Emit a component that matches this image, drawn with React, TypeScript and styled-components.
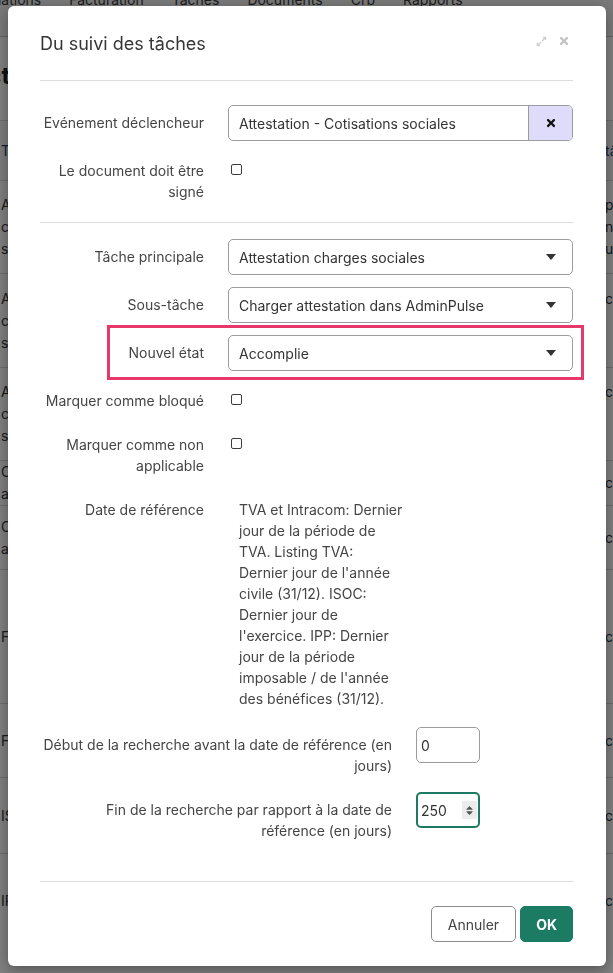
import { FaExpandAlt, FaSort, FaTimes } from 'react-icons/fa';
import styled, { createGlobalStyle } from 'styled-components';

const GlobalStyle = createGlobalStyle`
  * {
    box-sizing: border-box;
  }
  html,
  body {
    margin: 0;
    padding: 0;
    overflow: hidden;
    background: #fff;
    font-family: Inter, 'Noto Sans', sans-serif;
  }
`;

// ---- background page (dimmed behind the modal) ----

const Page = styled.div`
  margin-left: -100px;
  width: 813px;
  height: 973px;
  overflow: hidden;
  color: #333;
`;

const NavBar = styled.nav`
  display: flex;
  align-items: flex-start;
  gap: 28px;
  height: 37px;
  padding-left: 81px;
  background: #f3f3f3;
  border-bottom: 1px solid #c4c4c4;
  overflow: hidden;
`;

const NavLink = styled.span`
  margin-top: -10px;
  font-size: 14px;
  line-height: 20px;
  color: #3a3a3a;
`;

const PageTitle = styled.h1`
  margin: 0;
  height: 83px;
  padding: 24px 0 0 70px;
  font-size: 24px;
  line-height: 30px;
  font-weight: 700;
  color: #222;
`;

const TableRow = styled.div<{ $h: number; $head?: boolean }>`
  display: grid;
  grid-template-columns: 604px 1fr;
  height: ${(p) => p.$h}px;
  padding-left: 101px;
  border-top: 1px solid #d6d6d6;
  background: ${(p) => (p.$head ? '#f7f7f7' : '#fff')};
  color: ${(p) => (p.$head ? '#1f3d6b' : '#333')};
`;

const Cell = styled.div`
  display: flex;
  flex-direction: column;
  justify-content: center;
  font-size: 14px;
  line-height: 22px;
  white-space: nowrap;
  overflow: hidden;
`;

const rows = [
  { h: 60, left: ['Tâche'], right: ['tâche'], head: true },
  { h: 93, left: ['Attestation', 'cotisations', 'sociales'], right: ['pas', 'non', 'uploadé'] },
  { h: 94, left: ['Attestation', 'charges', 'sociales'], right: ['cotisations', '', ''] },
  { h: 93, left: ['Attestation', 'charges', 'sociales'], right: ['cotisations', '', ''] },
  { h: 45, left: ['Compte', 'annuel'], right: ['cotisations'] },
  { h: 64, left: ['Clôture', 'annuelle'], right: ['cotisations'] },
  { h: 134, left: ['Facture'], right: ['cotisations'] },
  { h: 74, left: ['Fiche'], right: ['cotisations'] },
  { h: 76, left: ['ISOC'], right: ['cotisations'] },
  { h: 94, left: ['IPP'], right: ['cotisations'] },
];

// ---- modal ----

const Overlay = styled.div`
  position: fixed;
  inset: 0;
  display: flex;
  padding: 6px 7px 7px 8px;
  background: rgba(0, 0, 0, 0.5);
`;

const Modal = styled.div`
  flex: 1;
  display: flex;
  flex-direction: column;
  padding: 0 33px 0 32px;
  background: #fff;
  border-radius: 6px;
  box-shadow: 0 4px 14px rgba(0, 0, 0, 0.35);
`;

const Header = styled.header`
  display: flex;
  justify-content: space-between;
  align-items: flex-start;
  padding: 24px 0 23px;
  border-bottom: 1px solid #dcdcdc;
`;

const Title = styled.h2`
  margin: 0;
  font-size: 18px;
  line-height: 27px;
  font-weight: 400;
  color: #363636;
`;

const HeaderTools = styled.div`
  display: flex;
  align-items: center;
  gap: 11px;
  padding: 5px 3px 0 0;
  color: #cfcfcf;
`;

const Section = styled.section<{ $top: number; $bottom: number; $border?: boolean }>`
  display: flex;
  flex-direction: column;
  gap: 12px;
  padding: ${(p) => p.$top}px 0 ${(p) => p.$bottom}px;
  border-bottom: ${(p) => (p.$border ? '1px solid #dcdcdc' : 'none')};
`;

const Row = styled.div<{ $wide?: boolean }>`
  position: relative;
  display: grid;
  grid-template-columns: ${(p) => (p.$wide ? '352px 64px' : '164px 1fr')};
  column-gap: 24px;
  align-items: start;
`;

const Label = styled.label`
  padding: 7px 0 4px;
  text-align: right;
  font-size: 14px;
  line-height: 21px;
  color: #454545;
`;

const Control = styled.div<{ $focus?: boolean }>`
  display: flex;
  align-items: center;
  justify-content: space-between;
  height: 36px;
  padding: 0 16px 0 10px;
  border: ${(p) => (p.$focus ? '2px solid #1c7a63' : '1px solid #9c9c9c')};
  border-radius: 5px;
  background: #fff;
  font-size: 14px;
  color: #333;
`;

const NumberControl = styled(Control)`
  padding: ${(p) => (p.$focus ? '0 1px 0 3px' : '0 5px 0 4px')};
`;

const Caret = styled.svg`
  width: 10px;
  height: 6px;
  fill: #333;
`;

const InputGroup = styled.div`
  display: flex;
  height: 36px;
  border: 1px solid #9c9c9c;
  border-radius: 5px;
  overflow: hidden;
  font-size: 14px;
  color: #333;
`;

const GroupText = styled.div`
  flex: 1;
  display: flex;
  align-items: center;
  padding: 0 10px;
`;

const Addon = styled.button`
  display: flex;
  align-items: center;
  justify-content: center;
  width: 44px;
  padding: 0;
  border: none;
  border-left: 1px solid #9c9c9c;
  background: #dfdbfb;
  color: #111;
`;

const Checkbox = styled.input.attrs({ type: 'checkbox' })`
  appearance: none;
  width: 11px;
  height: 11px;
  margin: 11px 0 0 3px;
  border: 1px solid #3d3d3d;
  border-radius: 2px;
  background: #fff;
`;

const StaticText = styled.p`
  margin: 0;
  padding: 7px 11px 6px;
  font-size: 14px;
  line-height: 21px;
  color: #454545;
  white-space: nowrap;
`;

const Spinner = styled.span`
  display: flex;
  align-items: center;
  justify-content: center;
  width: 15px;
  height: 18px;
  background: #ececec;
  color: #555;
`;

const Highlight = styled.div`
  position: absolute;
  top: -10px;
  left: 67px;
  right: -11px;
  bottom: -9px;
  border: 3px solid #e6386b;
  pointer-events: none;
`;

const Footer = styled.footer`
  display: flex;
  justify-content: flex-end;
  gap: 4px;
  margin-top: auto;
  padding: 24px 0;
  border-top: 1px solid #dcdcdc;
`;

const Button = styled.button<{ $primary?: boolean }>`
  height: 36px;
  padding: 0 ${(p) => (p.$primary ? 15 : 16)}px;
  border-radius: 5px;
  border: 1px solid ${(p) => (p.$primary ? '#1b7b63' : '#8c8c8c')};
  background: ${(p) => (p.$primary ? '#1b7b63' : '#fff')};
  color: ${(p) => (p.$primary ? '#fff' : '#444')};
  font-family: Inter, 'Noto Sans', sans-serif;
  font-size: 14px;
  font-weight: ${(p) => (p.$primary ? 700 : 400)};
`;

const Select = ({ value }: { value: string }) => (
  <Control>
    <span>{value}</span>
    <Caret viewBox='0 0 10 6'>
      <polygon points='0,0 10,0 5,6' />
    </Caret>
  </Control>
);

const referenceLines = [
  'TVA et Intracom: Dernier',
  'jour de la période de',
  'TVA. Listing TVA:',
  "Dernier jour de l'année",
  'civile (31/12). ISOC:',
  'Dernier jour de',
  "l'exercice. IPP: Dernier",
  'jour de la période',
  "imposable / de l'année",
  'des bénéfices (31/12).',
];

const App = () => {
  return (
    <>
      <GlobalStyle />
      <Page>
        <NavBar>
          <NavLink>Relations</NavLink>
          <NavLink>Facturation</NavLink>
          <NavLink>Tâches</NavLink>
          <NavLink>Documents</NavLink>
          <NavLink>Crb</NavLink>
          <NavLink>Rapports</NavLink>
        </NavBar>
        <PageTitle>Actions</PageTitle>
        {rows.map((row, i) => (
          <TableRow key={i} $h={row.h} $head={row.head}>
            <Cell>
              {row.left.map((line, j) => (
                <span key={j}>{line}</span>
              ))}
            </Cell>
            <Cell>
              {row.right.map((line, j) => (
                <span key={j}>{line || '\u00a0'}</span>
              ))}
            </Cell>
          </TableRow>
        ))}
      </Page>

      <Overlay>
        <Modal>
          <Header>
            <Title>Du suivi des tâches</Title>
            <HeaderTools>
              <FaExpandAlt size={11} />
              <FaTimes size={12} color='#c2c2c2' />
            </HeaderTools>
          </Header>

          <Section $top={24} $bottom={16} $border>
            <Row>
              <Label>Evénement déclencheur</Label>
              <InputGroup>
                <GroupText>Attestation - Cotisations sociales</GroupText>
                <Addon>
                  <FaTimes size={12} />
                </Addon>
              </InputGroup>
            </Row>
            <Row>
              <Label>Le document doit être signé</Label>
              <div>
                <Checkbox />
              </div>
            </Row>
          </Section>

          <Section $top={16} $bottom={0}>
            <Row>
              <Label>Tâche principale</Label>
              <Select value='Attestation charges sociales' />
            </Row>
            <Row>
              <Label>Sous-tâche</Label>
              <Select value='Charger attestation dans AdminPulse' />
            </Row>
            <Row>
              <Label>Nouvel état</Label>
              <Select value='Accomplie' />
              <Highlight />
            </Row>
            <Row>
              <Label>Marquer comme bloqué</Label>
              <div>
                <Checkbox />
              </div>
            </Row>
            <Row>
              <Label>Marquer comme non applicable</Label>
              <div>
                <Checkbox />
              </div>
            </Row>
            <Row>
              <Label>Date de référence</Label>
              <StaticText>
                {referenceLines.map((line, i) => (
                  <span key={i}>
                    {line}
                    <br />
                  </span>
                ))}
              </StaticText>
            </Row>
            <Row $wide>
              <Label>Début de la recherche avant la date de référence (en jours)</Label>
              <NumberControl>0</NumberControl>
            </Row>
            <Row $wide>
              <Label>Fin de la recherche par rapport à la date de référence (en jours)</Label>
              <NumberControl $focus>
                <span>250</span>
                <Spinner>
                  <FaSort size={11} />
                </Spinner>
              </NumberControl>
            </Row>
          </Section>

          <Footer>
            <Button>Annuler</Button>
            <Button $primary>OK</Button>
          </Footer>
        </Modal>
      </Overlay>
    </>
  );
};

export default App;
